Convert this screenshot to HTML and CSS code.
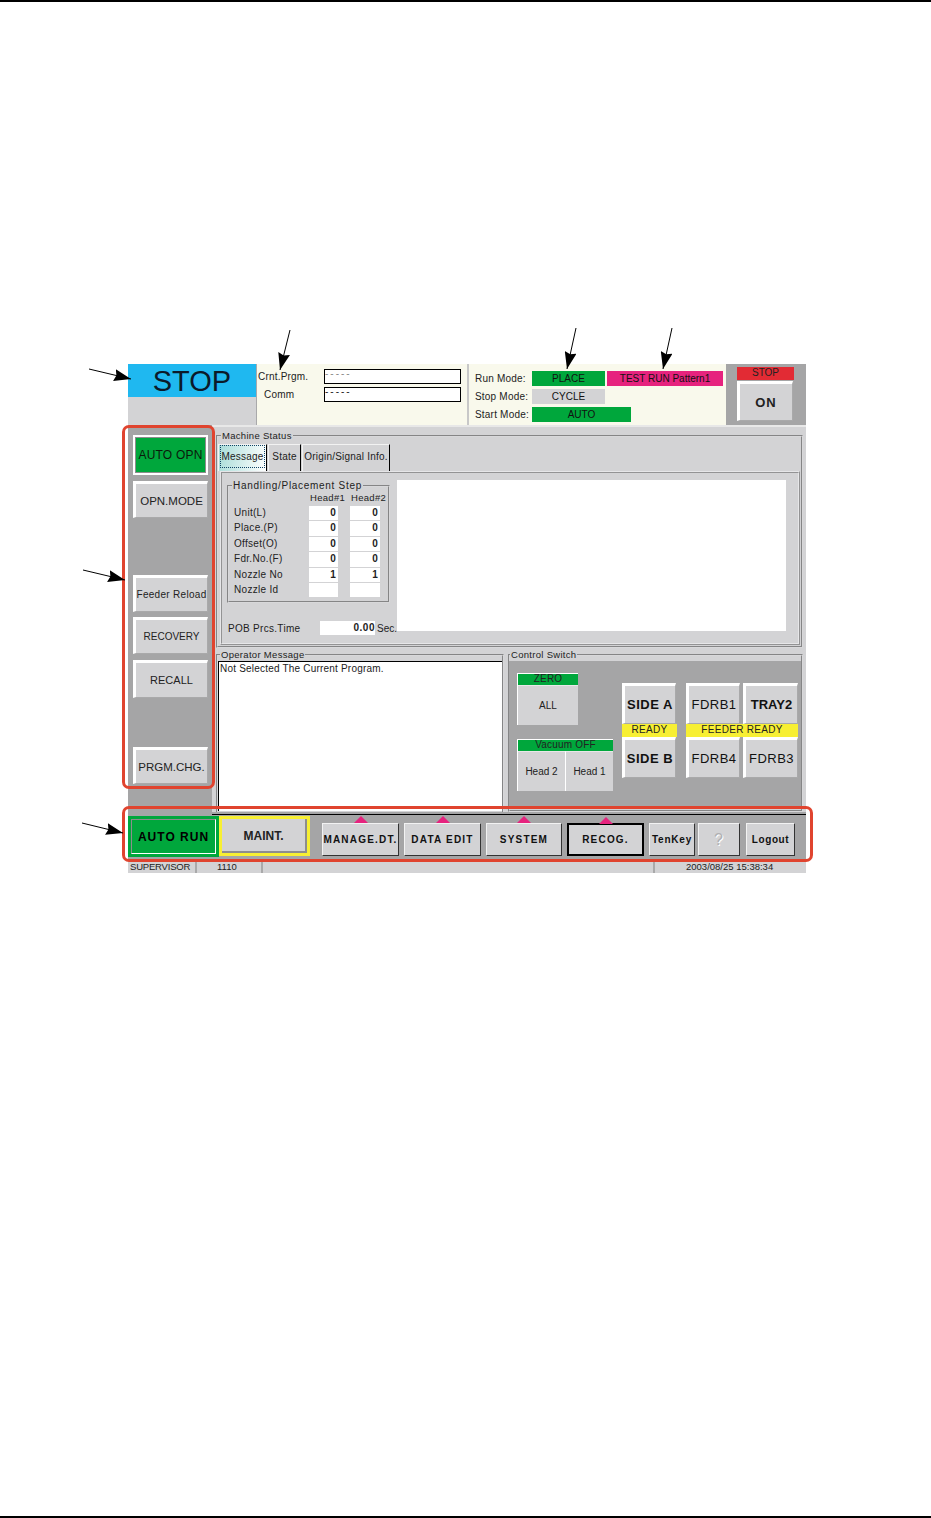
FILE: index.html
```html
<!DOCTYPE html>
<html lang="en">
<head>
    <meta charset="UTF-8">
    <title>Operation Screen</title>
    <link rel="stylesheet" href="styles.css">
</head>
<body>
<div class="page">
    <div class="screen">
        <div class="top">
            <div class="stop-box">
                <div class="stop-label">STOP</div>
            </div>
            <div class="prog-info">
                <div class="prog-row"><span class="prog-label">Crnt.Prgm.</span><span class="prog-value faint">-----</span></div>
                <div class="prog-row"><span class="prog-label indent">Comm</span><span class="prog-value">-----</span></div>
            </div>
            <div class="mode-info">
                <div class="mode-row">
                    <span class="mode-label">Run Mode:</span>
                    <span class="chip green w73">PLACE</span>
                    <span class="chip magenta">TEST RUN Pattern1</span>
                </div>
                <div class="mode-row">
                    <span class="mode-label">Stop Mode:</span>
                    <span class="chip grey w73">CYCLE</span>
                </div>
                <div class="mode-row">
                    <span class="mode-label">Start Mode:</span>
                    <span class="chip green w99">AUTO</span>
                </div>
            </div>
            <div class="on-box">
                <div class="on-head">STOP</div>
                <div class="btn on-btn">ON</div>
            </div>
        </div>

        <div class="main">
            <div class="side">
                <div class="btn side-btn auto-opn">AUTO OPN</div>
                <div class="btn side-btn opn-mode">OPN.MODE</div>
                <div class="btn side-btn feeder">Feeder Reload</div>
                <div class="btn side-btn recovery">RECOVERY</div>
                <div class="btn side-btn recall">RECALL</div>
                <div class="btn side-btn prgm">PRGM.CHG.</div>
            </div>

            <div class="content">
                <fieldset class="frame machine">
                    <legend>Machine Status</legend>
                    <div class="tabs">
                        <div class="tab tab-active"><span>Message</span></div>
                        <div class="tab tab-state">State</div>
                        <div class="tab tab-origin">Origin/Signal Info.</div>
                    </div>
                    <div class="panel">
                        <div class="panel-left">
                            <fieldset class="frame step">
                                <legend>Handling/Placement Step</legend>
                                <div class="step-grid">
                                    <span></span><span class="head">Head#1</span><span class="head">Head#2</span>
                                    <span>Unit(L)</span><span class="num">0</span><span class="num">0</span>
                                    <span>Place.(P)</span><span class="num">0</span><span class="num">0</span>
                                    <span>Offset(O)</span><span class="num">0</span><span class="num">0</span>
                                    <span>Fdr.No.(F)</span><span class="num">0</span><span class="num">0</span>
                                    <span>Nozzle No</span><span class="num">1</span><span class="num">1</span>
                                    <span>Nozzle Id</span><span class="num"></span><span class="num"></span>
                                </div>
                            </fieldset>
                            <div class="pob">
                                <span class="pob-label">POB Prcs.Time</span>
                                <span class="pob-value">0.00</span>
                                <span class="pob-unit">Sec.</span>
                            </div>
                        </div>
                        <div class="msg-white"></div>
                    </div>
                </fieldset>

                <div class="lower">
                    <fieldset class="frame operator">
                        <legend>Operator Message</legend>
                        <div class="op-text">Not Selected The Current Program.</div>
                    </fieldset>
                    <fieldset class="frame control">
                        <legend>Control Switch</legend>
                        <div class="ctl">
                            <div class="ctl-left">
                                <div class="ctl-group zero">
                                    <div class="ctl-head">ZERO</div>
                                    <div class="ctl-keys"><div class="ctl-key">ALL</div></div>
                                </div>
                                <div class="ctl-group vacuum">
                                    <div class="ctl-head">Vacuum OFF</div>
                                    <div class="ctl-keys">
                                        <div class="ctl-key">Head 2</div>
                                        <div class="ctl-key">Head 1</div>
                                    </div>
                                </div>
                            </div>
                            <div class="ctl-side">
                                <div class="btn big-btn">SIDE A</div>
                                <div class="ready">READY</div>
                                <div class="btn big-btn">SIDE B</div>
                            </div>
                            <div class="ctl-fdr">
                                <div class="fdr-row">
                                    <div class="btn big-btn">FDRB1</div>
                                    <div class="btn big-btn tray">TRAY2</div>
                                </div>
                                <div class="ready">FEEDER READY</div>
                                <div class="fdr-row">
                                    <div class="btn big-btn">FDRB4</div>
                                    <div class="btn big-btn">FDRB3</div>
                                </div>
                            </div>
                        </div>
                    </fieldset>
                </div>
            </div>
        </div>

        <div class="bar">
            <div class="auto-run"><span>AUTO RUN</span></div>
            <div class="maint"><span>MAINT.</span></div>
            <div class="nav">
                <div class="nav-btn has-tri w77">MANAGE.DT.</div>
                <div class="nav-btn has-tri w77">DATA EDIT</div>
                <div class="nav-btn has-tri w76">SYSTEM</div>
                <div class="nav-btn has-tri w77 selected">RECOG.</div>
                <div class="nav-btn w46">TenKey</div>
                <div class="nav-btn w42 help">?</div>
                <div class="nav-btn w49">Logout</div>
            </div>
        </div>

        <div class="status">
            <div class="st-cell st-user">SUPERVISOR</div>
            <div class="st-cell st-code">1110</div>
            <div class="st-cell st-fill"></div>
            <div class="st-cell st-date">2003/08/25 15:38:34</div>
        </div>
    </div>

    <!-- callouts drawn over the screenshot -->
    <div class="outline outline-side"></div>
    <div class="outline outline-bar"></div>
    <svg class="arrows" width="931" height="1518" viewBox="0 0 931 1518">
        <defs>
            <marker id="head" markerUnits="userSpaceOnUse" markerWidth="18" markerHeight="12" refX="17" refY="6" orient="auto">
                <path d="M0 0 L17 6 L0 12 L2 6 Z" fill="#000"/>
            </marker>
        </defs>
        <g stroke="#000" stroke-width="1" marker-end="url(#head)">
            <line x1="89" y1="369" x2="131" y2="379"/>
            <line x1="290" y1="330" x2="280" y2="370"/>
            <line x1="576" y1="328" x2="567" y2="369"/>
            <line x1="672" y1="328" x2="663" y2="369"/>
            <line x1="83" y1="570" x2="125" y2="580"/>
            <line x1="82" y1="823" x2="123" y2="833"/>
        </g>
    </svg>
</div>
</body>
</html>
```

FILE: styles.css
```css
* { box-sizing: border-box; }
body { margin: 0; background: white; font-family: "Liberation Sans", Arial, sans-serif; font-size: 10px; color: #222; }
.page { position: relative; width: 931px; height: 1518px; padding: 362px 0 0 128px; border-top: 2px solid #000; border-bottom: 2px solid #000; }
.screen { width: 678px; height: 509px; background: #d3d3d5; }

/* shared bevel button */
.btn { display: flex; align-items: center; justify-content: center; background: #d3d3d5; border-style: solid; border-width: 3px 1px 1px 3px; border-color: #fff #a9a9aa #a9a9aa #fff; }

/* top strip */
.top { display: flex; height: 61px; }
.stop-box { width: 128px; background: #d3d3d5; }
.stop-label { height: 33px; background: #1fb8f0; color: #0b1a2a; font-size: 29px; line-height: 35px; text-align: center; }
.prog-info { width: 211px; background: #f9f9ec; border-left: 1px solid #a9a9aa; padding-top: 5px; }
.prog-row { display: flex; align-items: center; height: 15px; margin-bottom: 3px; }
.prog-label { width: 67px; padding-left: 1px; letter-spacing: .2px; }
.prog-label.indent { padding-left: 7px; }
.prog-value { width: 137px; height: 15px; background: white; border: 1px solid #000; line-height: 8px; font-size: 10px; letter-spacing: 2px; }
.prog-value.faint { color: #888; }
.mode-info { width: 259px; background: #f9f9ec; border-left: 2px solid #c8c8c8; padding: 7px 0 0 6px; }
.mode-row { display: flex; gap: 2px; height: 15px; margin-bottom: 3px; align-items: center; }
.mode-label { width: 55px; letter-spacing: .2px; }
.chip { height: 15px; line-height: 15px; text-align: center; color: #111; }
.chip.green { background: #00a73c; }
.chip.grey { background: #d3d3d5; }
.chip.magenta { background: #e6237e; width: 116px; }
.w73 { width: 73px; }
.w99 { width: 99px; }
.on-box { width: 80px; background: #a5a5a6; padding: 3px 0 0 11px; }
.on-head { width: 57px; height: 13px; background: #e22b34; line-height: 11px; text-align: center; }
.on-btn { width: 56px; height: 40px; margin-top: 1px; font-size: 13px; font-weight: bold; letter-spacing: 1px; }

/* main area */
.main { display: flex; height: 387px; }
.side { display: flex; flex-direction: column; width: 84px; padding: 10px 0 0 5px; background: #a5a5a6; }
.side-btn { width: 75px; height: 37px; font-size: 11.5px; }
.auto-opn { height: 40px; background: #00a73c; border: 2px solid #fff; outline: 1px solid #8d8d8d; outline-offset: -3px; font-size: 12px; letter-spacing: .2px; color: #0b1a0b; white-space: nowrap; }
.opn-mode { margin-top: 6px; }
.feeder { margin-top: 57px; font-size: 10px; letter-spacing: .3px; white-space: nowrap; }
.recovery { margin-top: 5px; font-size: 10px; }
.recall { margin-top: 6px; height: 38px; font-size: 11px; }
.prgm { margin-top: 49px; }

.content { width: 594px; padding: 3px 3px 0 4px; border-top: 2px solid #e8e8e8; }
.frame { margin: 0; padding: 0; min-width: 0; border: 2px groove #d8d8da; }
.frame legend { margin-left: 3px; padding: 0 1px; height: 11px; line-height: 11px; font-size: 9.5px; letter-spacing: .3px; }
.machine { height: 218px; }

.tabs { display: flex; gap: 1px; height: 27px; margin: 3px 0 0 0; }
.tab { display: flex; align-items: center; justify-content: center; height: 27px; padding-bottom: 3px; background: #d3d3d5; border-top: 1px solid #f2f2f2; border-left: 1px solid #f2f2f2; border-right: 1px solid #000; font-size: 10px; letter-spacing: .2px; }
.tab-active { width: 49px; padding-bottom: 0; background: linear-gradient(100deg, #a8dcd8, #fff); border-right: 1px solid #000; }
.tab-active span { padding: 5px 1px; margin-bottom: 3px; outline: 1px dotted #146; }
.tab-state { width: 33px; }
.tab-origin { width: 88px; }

.panel { display: flex; width: 580px; height: 174px; margin: 0 0 0 2px; padding-top: 7px; border: 2px ridge #e6e6e8; }
.panel-left { width: 175px; }
.step { width: 163px; height: 123px; margin-left: 5px; }
.step legend { font-size: 10px; letter-spacing: .7px; }
.step-grid { display: grid; grid-template-columns: 63px 29px 30px; column-gap: 12px; grid-template-rows: 14px repeat(6, 14.4px); row-gap: 1px; margin: 0 0 0 5px; line-height: 14px; letter-spacing: .3px; white-space: nowrap; }
.head { font-size: 9.5px; padding-left: 1px; }
.num { background: white; text-align: right; padding-right: 2px; font-weight: bold; }
.pob { display: flex; align-items: center; height: 14px; margin: 18px 0 0 1px; }
.pob-label { width: 97px; padding-left: 5px; letter-spacing: .3px; white-space: nowrap; }
.pob-value { width: 55px; height: 14px; line-height: 14px; background: white; text-align: right; font-weight: bold; letter-spacing: .5px; }
.pob-unit { margin-left: 2px; }
.msg-white { width: 389px; height: 151px; background: white; }

.lower { display: flex; gap: 4px; margin-top: 1px; }
.operator { width: 288px; height: 163px; border-bottom: 0; }
.operator legend { margin-left: 2px; }
.op-text { height: 150px; margin: 1px 0 0 0; padding: 1px; background: white; border-top: 1px solid #000; border-left: 1px solid #000; line-height: 12px; letter-spacing: .2px; }
.control { width: 295px; height: 163px; }
.control legend { margin-left: 0; }
.ctl { display: flex; height: 146px; margin: 1px 0 0 -1px; padding: 12px 0 0 8px; background: #a5a5a6; }
.ctl-left { width: 96px; }
.ctl-group { border: 1px solid #fff; border-width: 1px 0 0 1px; background: #d3d3d5; }
.ctl-head { height: 11px; background: #00a73c; line-height: 10px; text-align: center; letter-spacing: .2px; }
.ctl-keys { display: flex; height: 40px; }
.ctl-key { flex: 1; display: flex; align-items: center; justify-content: center; border-left: 1px solid #fff; border-top: 1px solid #e8e8e8; }
.ctl-key:first-child { border-left: 0; }
.zero { width: 61px; }
.vacuum { width: 96px; margin-top: 14px; }
.ctl-side { width: 55px; margin-left: 9px; padding-top: 10px; }
.ctl-fdr { width: 112px; margin-left: 9px; padding-top: 10px; }
.fdr-row { display: flex; gap: 3px; }
.big-btn { width: 54px; height: 41px; font-size: 13px; font-weight: bold; letter-spacing: .5px; color: #111; white-space: nowrap; }
.fdr-row .big-btn { font-weight: normal; }
.fdr-row .big-btn:nth-child(2) { width: 55px; }
.fdr-row .tray { font-weight: bold; letter-spacing: 0; }
.ready { height: 13px; background: #f7ef33; line-height: 12px; text-align: center; letter-spacing: .3px; }

/* bottom menu */
.bar { position: relative; display: flex; align-items: flex-start; height: 48px; background: #a5a5a6; }
.bar::after { content: ""; position: absolute; left: 84px; right: 0; top: 2px; height: 1px; background: #000; }
.auto-run { width: 91px; height: 41px; margin-top: 4px; padding: 3px; background: #00a73c; }
.auto-run span { display: flex; align-items: center; justify-content: center; height: 35px; border: 1px solid #fff; border-top-color: #8d8d8d; border-left-color: #8d8d8d; font-size: 12px; font-weight: bold; letter-spacing: 1px; color: #000; white-space: nowrap; }
.maint { width: 91px; height: 40px; margin-top: 4px; background: #d3d3d5; border: 3px solid #f7ef33; }
.maint span { display: flex; align-items: center; justify-content: center; height: 34px; padding-top: 2px; border-right: 2px solid #8d8d8d; border-bottom: 2px solid #8d8d8d; font-size: 12px; font-weight: bold; }
.nav { display: flex; gap: 5px; margin: 11px 0 0 12px; }
.nav-btn { position: relative; display: flex; align-items: center; justify-content: center; height: 33px; background: #d3d3d5; border: 1px solid #333; border-top-color: #f2f2f2; border-left-color: #f2f2f2; font-size: 10px; font-weight: bold; letter-spacing: 1.2px; color: #111; white-space: nowrap; }
.has-tri::before { content: ""; position: absolute; left: 50%; top: -8px; margin-left: -7px; border: 7px solid transparent; border-top: 0; border-bottom: 7px solid #e6237e; }
.selected { border: 2px solid #000; }
.w77 { width: 77px; }
.w76 { width: 76px; }
.w46 { width: 46px; margin-right: -2px; letter-spacing: .8px; }
.w42 { width: 42px; margin-right: 1px; }
.w49 { width: 49px; letter-spacing: .6px; }
.help { color: #b0b0b2; font-size: 16px; font-weight: normal; text-shadow: 1px 1px #fff; }

/* status line */
.status { display: flex; height: 13px; line-height: 13px; font-size: 9.5px; }
.st-cell { padding-left: 2px; border-right: 2px solid #a9a9aa; white-space: nowrap; }
.st-user { width: 69px; letter-spacing: -.2px; }
.st-code { width: 66px; padding-left: 20px; }
.st-fill { width: 392px; }
.st-date { width: 151px; padding-left: 31px; border-right: 0; }

/* callouts */
.outline { position: absolute; border: 3px solid #e0442f; border-radius: 7px; }
.outline-side { left: 122px; top: 423px; width: 93px; height: 364px; }
.outline-bar { left: 122px; top: 804px; width: 691px; height: 56px; }
.arrows { position: absolute; left: 0; top: -2px; }
```
